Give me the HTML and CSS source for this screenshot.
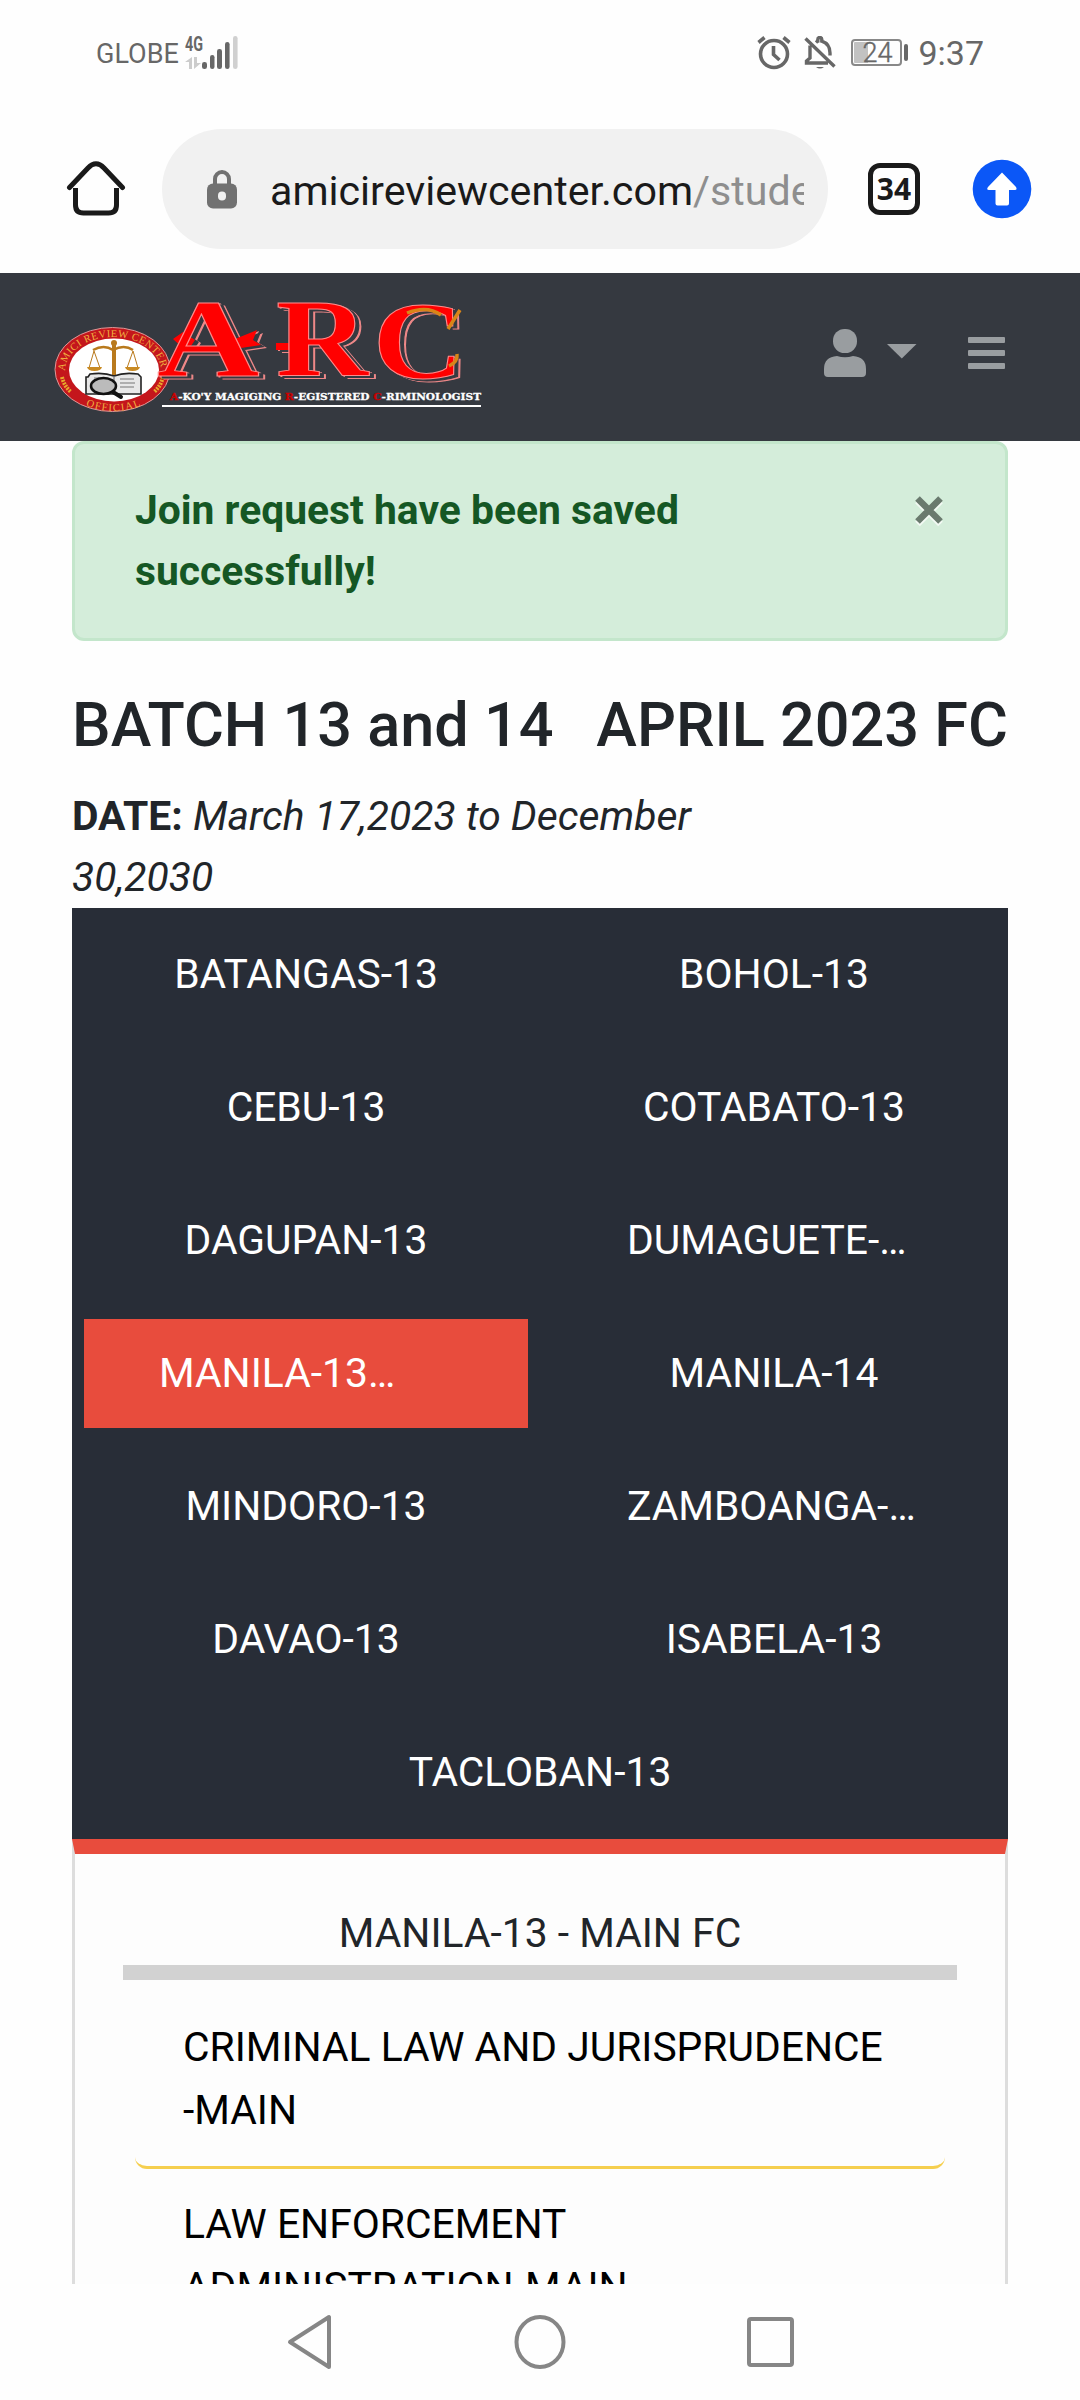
FILE: index.html
```html
<!DOCTYPE html>
<html lang="en">
<head>
<meta charset="utf-8">
<title>Amici Review Center</title>
<link rel="stylesheet" href="styles.css">
</head>
<body>
<div class="screen">
  <header class="status">
    <div class="status-left">
      <span class="carrier">GLOBE</span>
      <svg class="signal" width="56" height="36" viewBox="0 0 56 36">
        <text x="1" y="15" class="net" textLength="18" lengthAdjust="spacingAndGlyphs">4G</text>
        <path d="M8 21v12H5v-7H1zM10 21h3v6h4l-7 6z" fill="#ccc"/>
        <g fill="#676767"><rect x="18" y="26" width="5" height="7" rx="2.3"/><rect x="26" y="19" width="4.500" height="14" rx="2.200"/><rect x="33" y="13" width="5" height="20" rx="2.300"/><rect x="41" y="6" width="4.600" height="27" rx="2.300"/></g>
        <rect x="49" y="0" width="4.600" height="33" rx="2.300" fill="#d0d0d0"/>
      </svg>
    </div>
    <div class="status-right">
      <svg width="34" height="34" viewBox="0 0 34 34" fill="none" stroke="#676767" stroke-width="3.600"><circle cx="17" cy="18" r="13.500"/><path d="M16.500 10v8.500l6 5.500M1.500 6.500l6-5M32.500 6.500l-6-5"/></svg>
      <svg class="bell" width="32" height="34" viewBox="0 0 32 34" fill="none" stroke="#676767" stroke-width="3.400"><path d="M6 9.500V22l-3.500 3v2H24M12 6.500q1-1 1.800-1.300V3.500a2 2 0 0 1 4 0v1.700Q26 8 26 17v2.500M1.500 2.500l29 28"/><path d="M12 31h8q-4 3-8 0z" fill="#676767" stroke="none"/></svg>
      <div class="battery"><span>24</span></div><i class="tip"></i>
      <span class="clock">9:37</span>
    </div>
  </header>

  <div class="toolbar">
    <svg class="home" width="60" height="58" viewBox="0 0 60 58" fill="none" stroke="#1a1a1a" stroke-width="5" stroke-linecap="round"><path d="M3.500 27.500L22 8q8-8.500 16 0l18.500 19.500"/><path stroke-linecap="butt" d="M9.500 28v17q0 8 8 8h25q8 0 8-8V28"/></svg>
    <div class="address">
      <svg width="30" height="40" viewBox="0 0 30 40"><path d="M8 16V10a7 7 0 0 1 14 0v6" fill="none" stroke="#717171" stroke-width="4"/><rect y="14.500" width="30" height="25" rx="6" fill="#717171"/><rect x="11" y="22.500" width="8" height="9" rx="4" fill="#f1f1f1"/></svg>
      <div class="url">amicireviewcenter.com<span>/stude</span></div>
    </div>
    <div class="tabs-count">34</div>
    <svg class="update" width="60" height="60" viewBox="0 0 60 60"><circle cx="30" cy="30" r="29.300" fill="#0b57f7"/><path d="M30 13.500L44 28q1.500 3-1 3H37v13.500q0 2-2 2H25.500q-2 0-2-2V31H17q-3 0-1-3z" fill="#fff"/></svg>
  </div>

  <main class="page">
    <nav class="navbar">
      <svg class="logo" width="430" height="130" viewBox="0 0 430 130">
        <defs>
          <path id="arc-top" d="M12 82A48 34 0 0 1 108 82"/>
          <path id="arc-bottom" d="M33 116.500A54 40.500 0 0 0 90 115.500"/>
        </defs>
        <ellipse cx="59.500" cy="80.500" rx="57.500" ry="42" fill="#c4161c" stroke="#d99" stroke-width="1"/>
        <ellipse cx="61" cy="81" rx="45" ry="31.500" fill="#fff"/>
        <text class="seal"><textPath href="#arc-top" textLength="126">AMICI REVIEW CENTER</textPath></text>
        <text class="seal"><textPath href="#arc-bottom" textLength="56">OFFICIAL</textPath></text>
        <path d="M9 88q2 9 9 15M110 88q-2 9-9 15" stroke="#e8a72c" stroke-width="4" stroke-dasharray="2 1" fill="none"/>
        <g transform="translate(1 9)">
          <g fill="none" stroke="#b97a1d"><path d="M60 45v34" stroke-width="4"/><path d="M39 52q11-6 20 0 11-6 20 0" stroke-width="2.500"/><path d="M40 53l-5 17M40 53l6 17M79 53l-6 17M79 53l5 17" stroke-width="1"/></g>
          <path d="M33 69h15q-1 4-7.500 4T33 69zM71 69h15q-1 4-7.500 4T71 69z" fill="#c98a22"/><circle cx="60" cy="45" r="3" fill="#b97a1d"/>
          <path d="M34 79l2-3q14-2 24 2 10-4 24-2l3 3v17H32V79z" fill="#e8e8e8" stroke="#222" stroke-width="1.600"/>
          <path d="M60 78v14M66 81h14M66 85h15M66 89h14M40 80h14" stroke="#777" stroke-width="1.200"/>
          <ellipse cx="49.500" cy="88" rx="12.500" ry="8" fill="#bbb" stroke="#111" stroke-width="2.500"/><path d="M59 94l8 5" stroke="#111" stroke-width="4" stroke-linecap="round"/>
        </g>
        <g class="arc">
          <path class="barb" d="M120 50l10-7 12 8-8 12zM182 50l22-9-4 10 8 5-20 3zM223 54h14v7h-14z"/>
          <text transform="translate(104 87) scale(1.280 1)">A</text><text transform="translate(223 87) scale(1.150 1)">R</text><text transform="translate(320 89) scale(1.130 1)">C</text>
        </g>
        <path d="M354 24q20-8 34 2M395 40l12-19M396 77q9-4 8-12" fill="none" stroke="#d98518" stroke-width="3.500"/>
        <text x="117" y="111" class="motto" textLength="311" lengthAdjust="spacingAndGlyphs"><tspan class="r">A</tspan>-KO'Y MAGIGING <tspan class="r">R</tspan>-EGISTERED <tspan class="r">C</tspan>-RIMINOLOGIST</text>
        <path d="M109 117H428" stroke="#fff" stroke-width="2"/>
      </svg>
      <div class="nav-right">
        <svg width="42" height="48" viewBox="0 0 42 48" fill="#999da0"><rect x="9" y="0" width="24" height="24" rx="11.500"/><path d="M0 42V40Q0 28 13 27q8 2.500 16 0 13 1 13 13v4q0 4-4 4H4q-4 0-4-4z"/></svg>
        <svg class="caret" width="30" height="15" viewBox="0 0 30 15"><path d="M0 0h29.500L14.800 14.500z" fill="#999da0"/></svg>
        <svg class="burger" width="37" height="33" viewBox="0 0 37 33" fill="#999da0"><rect width="37" height="6" rx="1"/><rect y="13" width="37" height="6" rx="1"/><rect y="26" width="37" height="6" rx="1"/></svg>
      </div>
    </nav>

    <div class="content">
      <div class="alert">
        <strong>Join request have been saved<br>successfully!</strong>
        <svg width="28" height="31" viewBox="0 0 28 31" fill="none" stroke-width="6.500"><path d="M2.500 5l23 23M25.500 5l-23 23" stroke="#f3faf4"/><path d="M2.500 2.500l23 23M25.500 2.500l-23 23" stroke="#6a7a6e"/></svg>
      </div>
      <div class="heading"><h1>BATCH 13 and 14</h1><h1>APRIL 2023 FC</h1></div>
      <p class="date"><b>DATE:</b> <i>March 17,2023 to December<br>30,2030</i></p>

      <div class="tabs">
        <a>BATANGAS-13</a><a>BOHOL-13</a>
        <a>CEBU-13</a><a>COTABATO-13</a>
        <a>DAGUPAN-13</a><a class="cut">DUMAGUETE-…</a>
        <a class="cut active">MANILA-13…</a><a>MANILA-14</a>
        <a>MINDORO-13</a><a class="cut">ZAMBOANGA-…</a>
        <a>DAVAO-13</a><a>ISABELA-13</a>
        <a class="wide">TACLOBAN-13</a>
      </div>

      <section class="panel">
        <h2>MANILA-13 - MAIN FC</h2>
        <div class="subject">CRIMINAL LAW AND JURISPRUDENCE<br>-MAIN</div>
        <div class="subject">LAW ENFORCEMENT<br>ADMINISTRATION-MAIN</div>
      </section>
    </div>
  </main>

  <footer class="sysnav">
    <svg width="46" height="56" viewBox="0 0 46 56" fill="none" stroke="#868686" stroke-width="4" stroke-linejoin="round"><path d="M42 3v50L3 28z"/></svg>
    <svg width="52" height="56" viewBox="0 0 52 56" fill="none" stroke="#868686" stroke-width="4"><ellipse cx="26" cy="28" rx="23.500" ry="25"/></svg>
    <svg width="47" height="50" viewBox="0 0 47 50" fill="none" stroke="#868686" stroke-width="4"><rect x="2" y="2" width="43" height="46" rx="2"/></svg>
  </footer>
</div>
</body>
</html>
```
FILE: styles.css
```css
* { box-sizing: border-box; }
body { margin: 0; background: #fefefe; font-family: Roboto, sans-serif; color: #212529; }
svg { display: block; flex: none; }
.screen { width: 1080px; height: 2400px; display: flex; flex-direction: column; overflow: hidden; }

.status { height: 110px; padding: 36px 96px 0 96px; display: flex; justify-content: space-between; color: #676767; }
.status-left, .status-right { display: flex; }
.carrier { width: 88px; font-size: 27px; line-height: 36px; white-space: nowrap; }
.net { font: 700 20px Roboto, sans-serif; fill: #676767; }
.bell { margin-left: 13px; }
.battery { margin: 3px 0 0 15px; width: 51px; height: 27px; border: 2px solid #888; border-radius: 4px; font-size: 27px; line-height: 24px; font-weight: 300; text-align: center; background: linear-gradient(90deg, #c2c2c2 14px, transparent 14px) content-box; padding: 1px 0 1px 1px; -webkit-text-stroke: .4px; }
.battery span { display: block; margin-top: -1px; }
.tip { width: 4px; height: 17px; margin: 8px 0 0 2px; border-radius: 2px; background: #676767; }
.clock { margin-left: 10px; font-size: 34px; line-height: 35px; white-space: nowrap; }

.toolbar { height: 163px; padding: 19px 48px 0 66px; display: flex; align-items: flex-start; }
.home { margin-top: 31px; }
.address { margin-left: 36px; width: 666px; height: 120px; border-radius: 60px; background: #f1f1f1; padding: 0 24px 0 45px; display: flex; align-items: center; }
.url { margin-left: 33px; padding-top: 3px; width: 535px; overflow: hidden; white-space: nowrap; font-size: 41.200px; line-height: 60px; color: #1a1a1a; }
.url span { color: #8e8e8e; }
.tabs-count { margin: 34px 0 0 40px; width: 52px; height: 52px; border: 5px solid #1a1a1a; border-radius: 12px; font: 700 30px/42px "Noto Sans", sans-serif; color: #1a1a1a; text-align: center; }
.update { margin: 30px 0 0 52px; }

.page { height: 2011px; overflow: hidden; }
.navbar { height: 168px; background: #353940; display: flex; justify-content: space-between; padding: 16px 75px 0 53px; }
.seal { font: 10.500px "Liberation Serif", serif; fill: #f0b040; }
.arc { font: 700 111px "Liberation Serif", serif; fill: #f00; stroke: #ff8a8a; stroke-width: 1; filter: drop-shadow(4px 2px 0 #353940) drop-shadow(2px 1px 0 #e88); }
.barb { stroke: none; }
.motto { font: 700 9.500px "DejaVu Serif", serif; fill: #fff; stroke: #fff; stroke-width: .3; }
.motto .r { fill: #c00; stroke: #c00; }
.nav-right { display: flex; padding-top: 40px; }
.caret { margin: 15px 0 0 21px; }
.burger { margin: 8px 0 0 51px; }
.content { padding: 0 72px; }
.alert { height: 200px; border: 3px solid #c3e6cb; border-radius: 12px; background: #d4edda; padding: 36px 62px 0 60px; display: flex; justify-content: space-between; color: #155724; font-size: 40.800px; line-height: 61px; }
.alert svg { margin-top: 16px; }
.heading { display: flex; justify-content: space-between; margin-top: 48px; }
h1 { margin: 0; font-size: 61.200px; line-height: 73px; font-weight: 500; white-space: nowrap; }
.date { margin: 24px 0 0; height: 122px; font-size: 40.800px; line-height: 61px; }

.tabs { display: grid; grid-template-columns: 1fr 1fr; background: #282d37; color: #fff; }
.tabs a { margin: 12px; height: 109px; padding: 0 72px; font-size: 40.800px; line-height: 109px; text-align: center; white-space: nowrap; }
.tabs .cut { padding: 0 75px; text-align: left; }
.tabs .active { background: #e84c3d; }
.tabs .wide { grid-column: 1 / 3; }
.panel { height: 500px; border: 3px solid #ddd; border-top: 15px solid #e84c3d; background: #fdfdfd; padding: 48px 48px 0; }
h2 { margin: 0 0 24px; height: 78px; border-bottom: 15px solid #d2d2d2; font-size: 40.800px; line-height: 63px; font-weight: 400; text-align: center; }
.subject { margin: 0 12px 12px; height: 165px; padding: 12px 48px 0; border-bottom: 3px solid #f5cf4f; border-radius: 12px; font-size: 40.800px; line-height: 63px; color: #000; white-space: nowrap; }

.sysnav { height: 116px; display: flex; align-items: center; justify-content: center; gap: 181px; }
```
